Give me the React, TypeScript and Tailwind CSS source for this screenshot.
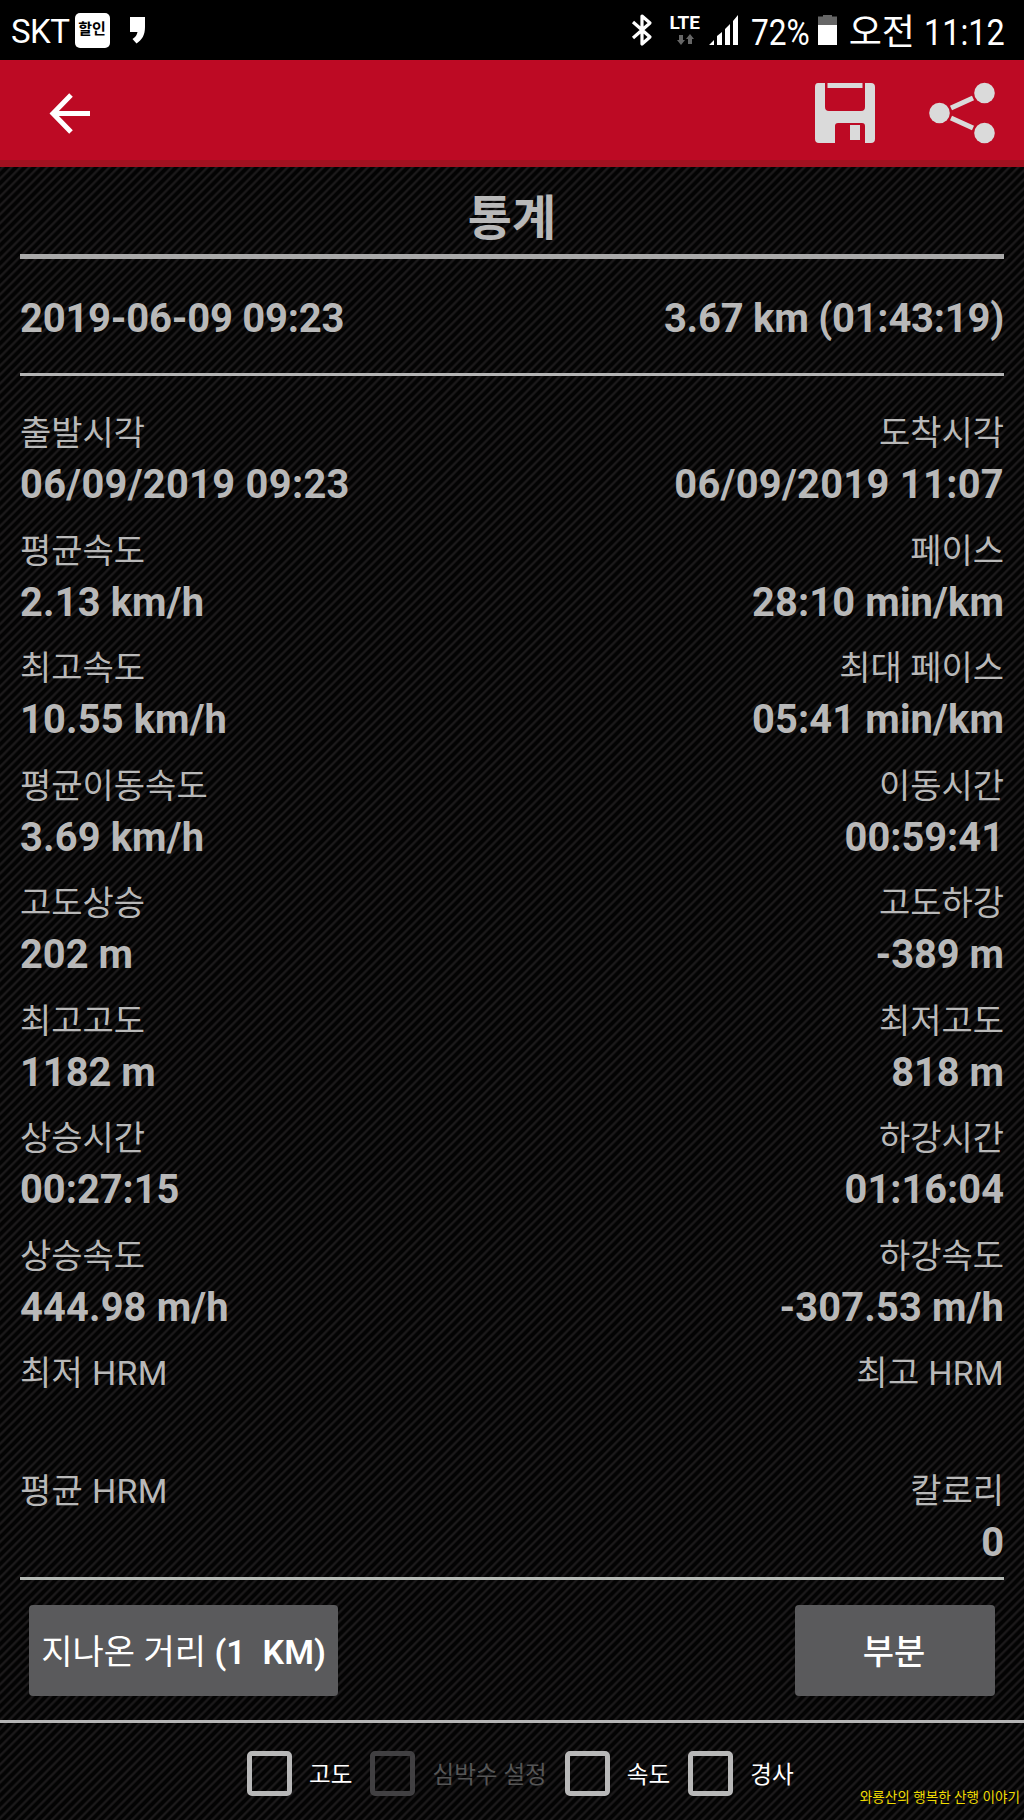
import { clsx } from 'clsx';

interface Stat {
  label: string;
  value: string;
}

interface ChartToggle {
  label: string;
  disabled?: boolean;
}

const rows: [Stat, Stat][] = [
  [{ label: '출발시각', value: '06/09/2019 09:23' }, { label: '도착시각', value: '06/09/2019 11:07' }],
  [{ label: '평균속도', value: '2.13 km/h' }, { label: '페이스', value: '28:10 min/km' }],
  [{ label: '최고속도', value: '10.55 km/h' }, { label: '최대 페이스', value: '05:41 min/km' }],
  [{ label: '평균이동속도', value: '3.69 km/h' }, { label: '이동시간', value: '00:59:41' }],
  [{ label: '고도상승', value: '202 m' }, { label: '고도하강', value: '-389 m' }],
  [{ label: '최고고도', value: '1182 m' }, { label: '최저고도', value: '818 m' }],
  [{ label: '상승시간', value: '00:27:15' }, { label: '하강시간', value: '01:16:04' }],
  [{ label: '상승속도', value: '444.98 m/h' }, { label: '하강속도', value: '-307.53 m/h' }],
  [{ label: '최저 HRM', value: '' }, { label: '최고 HRM', value: '' }],
  [{ label: '평균 HRM', value: '' }, { label: '칼로리', value: '0' }],
];

const toggles: ChartToggle[] = [
  { label: '고도' },
  { label: '심박수 설정', disabled: true },
  { label: '속도' },
  { label: '경사' },
];

function StatusBar() {
  return (
    <div className="flex h-[60px] shrink-0 items-center bg-black pl-[11px] pr-[20px] text-white">
      <span className="pt-[3px] text-[33px] leading-[57px] tracking-[-0.5px]">SKT</span>
      <span className="ml-[5px] flex h-[35px] w-[35px] items-center justify-center rounded-[5px] bg-white pb-[1px] text-[15px] font-bold text-black">
        할인
      </span>
      <svg className="ml-[19px]" width="17" height="30" viewBox="0 0 17 30">
        <path d="M1 2h15v10c0 8-3 13-8.500 16.500l-4-4.500c3-2 4.500-4 5-7H1z" fill="#fff" />
      </svg>

      <div className="ml-auto flex items-center">
        <svg width="22" height="34" viewBox="0 0 22 34" fill="none" stroke="#fff" strokeWidth="3.200">
          <path d="M2 9l17 15-8 7V3l8 7L2 25" strokeLinejoin="round" />
        </svg>
        <div className="ml-[16px] flex w-[32px] flex-col items-center">
          <span className="text-[19px] font-bold leading-[18px]">LTE</span>
          <svg className="mt-[2px]" width="18" height="12" viewBox="0 0 18 12" fill="#666">
            <path d="M3 1h4v5h2l-4 5-4-5h2zM12 10h4V5h2l-4-5-4 5h2z" />
          </svg>
        </div>
        <svg className="ml-[7px]" width="32" height="32" viewBox="0 0 32 32" fill="#fff">
          <path d="M1 31l5-5v5zM9 31V22l5-4v13zM17 31V15l5-5v21zM25 31V7l5-6v30z" />
        </svg>
        <span className="ml-[11px] h-[60px] w-[59px] pt-[3px] text-[36px] leading-[60px]">
          <span className="inline-block origin-left scale-x-[0.88]">72%</span>
        </span>
        <svg className="ml-[8px]" width="19" height="31" viewBox="0 0 19 31">
          <path d="M0 1.500h5V0h9v1.500h5V10H0z" fill="#666" />
          <path d="M0 10h19v20H0z" fill="#fff" />
        </svg>
        <span className="ml-[12px] h-[60px] pt-[3px] text-[36px] leading-[60px]">오전</span>
        <span className="ml-[9px] h-[60px] w-[80px] pt-[3px] text-[36px] leading-[60px]">
          <span className="inline-block origin-left scale-x-[0.9]">11:12</span>
        </span>
      </div>
    </div>
  );
}

function AppBar() {
  return (
    <header className="flex h-[107px] shrink-0 items-start justify-between border-b-[7px] border-[#a11120] bg-[#bd0a24]">
      <svg className="ml-[49px] mt-[33px]" width="42" height="41" viewBox="0 0 42 41" fill="none" stroke="#fff" strokeWidth="5">
        <path d="M22 2L4 20.500 22 39M4 20.500h37" />
      </svg>
      <div className="mr-[28px] mt-[21px] flex">
        <svg width="64" height="64" viewBox="0 0 64 64" fill="#dadada">
          <path d="M5 2h7v24q0 4 4 4h32q4 0 4-4V2h6q4 0 4 4v52q0 4-4 4h-6V45q0-3-3-3H25q-3 0-3 3v17H6q-4 0-4-4V6q0-4 3-4z" />
          <path d="M14.500 2h35v5h-35zM37 44h10v15H37z" />
        </svg>
        <svg className="ml-[49px]" width="70" height="64" viewBox="0 0 70 64" fill="#dadada">
          <path d="M25 27L47 17M25 37l22 10" stroke="#dadada" strokeWidth="5" />
          <circle cx="13.500" cy="32" r="10.300" />
          <circle cx="58.500" cy="12" r="10.300" />
          <circle cx="58.500" cy="52" r="10.300" />
        </svg>
      </div>
    </header>
  );
}

function StatCell({ stat, right }: { stat: Stat; right?: boolean }) {
  const isDate = stat.value.includes('/2019');
  const isRate = !isDate && stat.value.includes('/');

  return (
    <div className={clsx('flex flex-col', right && 'items-end')}>
      <span
        className={clsx(
          'h-[50px] whitespace-pre text-[34px] leading-[50px]',
          stat.label.includes('HRM') && 'tracking-[0.3px]',
        )}
      >
        {stat.label}
      </span>
      <span
        className={clsx(
          'h-[54px] whitespace-pre text-[39.800px] font-bold leading-[54px] [font-kerning:none]',
          isDate && 'tracking-[0.320px]',
          isRate && 'tracking-[0.150px]',
        )}
      >
        {stat.value}
      </span>
    </div>
  );
}

export default function App() {
  return (
    <div className="flex h-[1820px] w-[1024px] flex-col overflow-hidden bg-[#030303] bg-[repeating-linear-gradient(135deg,#1c1a1b_0px,#1c1a1b_0.800px,#030303_2.400px,#030303_4.800px,#1c1a1b_6.300px)] font-[Roboto,'Noto_Sans_CJK_KR',sans-serif] text-[#b8b8b8]">
      <StatusBar />
      <AppBar />

      <main className="flex flex-col px-[20px]">
        <h1 className="h-[87px] pt-[16px] text-center text-[48px] font-bold leading-[72px]">통계</h1>
        <div className="h-[5px] bg-[#a9a9a9]" />
        <div className="flex h-[114px] items-center justify-between pt-[5px] text-[40px] font-bold tracking-[-0.250px]">
          <span>2019-06-09 09:23</span>
          <span>3.67 km (01:43:19)</span>
        </div>
        <div className="h-[3px] bg-[#b4b4b4]" />

        <div className="flex h-[1201px] flex-col pt-[32px]">
          {rows.map(([left, right]) => (
            <div key={left.label} className="flex h-[117.500px] shrink-0 justify-between">
              <StatCell stat={left} />
              <StatCell stat={right} right />
            </div>
          ))}
        </div>
        <div className="h-[3px] bg-[#b4b9b4]" />

        <div className="flex h-[140px] items-start justify-between px-[9px] pt-[25px] text-[34px] font-medium text-white">
          <button className="h-[91px] w-[309px] whitespace-pre rounded-[4px] bg-[#5a5a5c] pt-[3px]">
            <span className="font-normal">지나온 거리 </span>
            <span className="font-semibold">(1  KM)</span>
          </button>
          <button className="h-[91px] w-[200px] rounded-[4px] bg-[#5a5a5c] pr-[2px] pt-[3px]">부분</button>
        </div>
      </main>

      <footer className="flex flex-1 items-start border-t-[3px] border-[#b4b4b4] pl-[247px] pt-[28px]">
        {toggles.map((toggle) => (
          <label
            key={toggle.label}
            className={clsx(
              'mr-[18px] flex h-[45px] items-start whitespace-nowrap text-[23.600px] leading-[45px]',
              toggle.disabled ? 'text-[#555]' : 'text-white',
            )}
          >
            <span
              className={clsx(
                'mr-[17px] h-[45px] w-[45px] rounded-[5px] border-[5px]',
                toggle.disabled ? 'border-[#414042]' : 'border-[#b8b8b8]',
              )}
            />
            <span className="pt-[2px]">{toggle.label}</span>
          </label>
        ))}
        <span className="ml-auto mr-[4px] mt-[34px] whitespace-nowrap text-[13.600px] leading-[24px] text-[#f0dc00]">
          와룡산의 행복한 산행 이야기
        </span>
      </footer>
    </div>
  );
}
